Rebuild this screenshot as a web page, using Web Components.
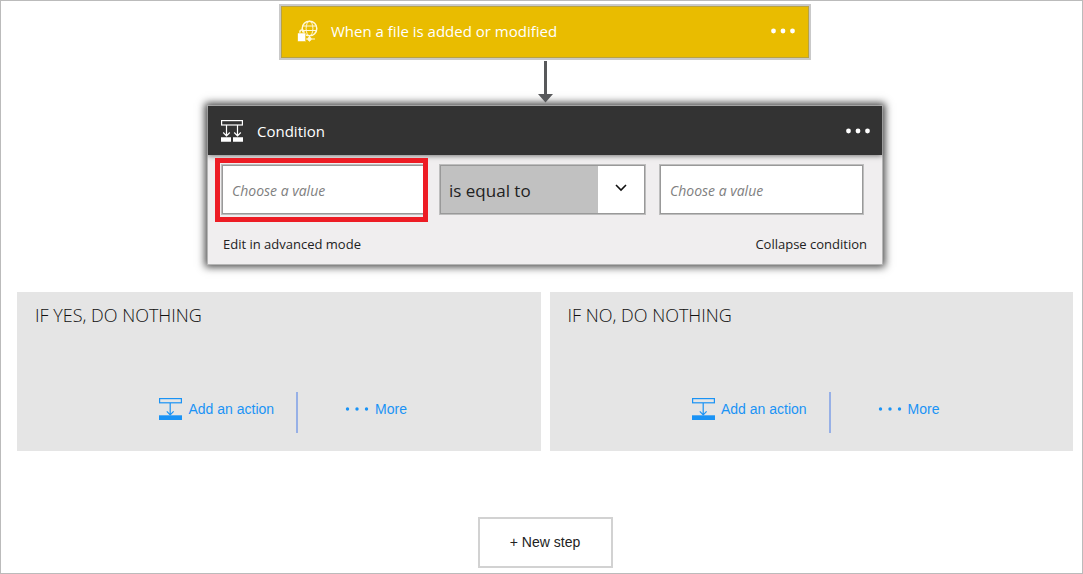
<!DOCTYPE html>
<html lang="en">
<head>
<meta charset="utf-8">
<meta name="viewport" content="width=device-width, initial-scale=1">
<title>Flow designer</title>
<style>
  html { --ui: "Open Sans", "Noto Sans", sans-serif; --alt: "Liberation Sans", Arial, sans-serif; }
  body { margin: 0; font-family: var(--ui); color: #222; background: #fff; }
</style>
</head>
<body>
<flow-canvas>
  <trigger-card>When a file is added or modified</trigger-card>
  <flow-arrow></flow-arrow>
  <condition-card></condition-card>
  <branch-panel slot="branches">IF YES, DO NOTHING</branch-panel>
  <branch-panel slot="branches">IF NO, DO NOTHING</branch-panel>
  <new-step slot="footer">+ New step</new-step>
</flow-canvas>

<script>
function define(name, html) {
  const template = document.createElement('template');
  template.innerHTML = html;
  customElements.define(name, class extends HTMLElement {
    constructor() {
      super();
      this.attachShadow({ mode: 'open' }).append(template.content.cloneNode(true));
    }
  });
}

define('flow-canvas', `
  <style>
    :host { display: block; box-sizing: border-box; min-height: 100vh; padding: 3px 9px 5px 16px; border: 1px solid #bbb; background: #fff; }
    .steps { display: flex; flex-direction: column; align-items: center; }
    .branches { display: grid; grid-template-columns: 1fr 1fr; gap: 9px; margin-top: 27px; }
    .footer { display: flex; justify-content: center; margin-top: 66px; }
  </style>
  <main>
    <div class="steps"><slot></slot></div>
    <div class="branches"><slot name="branches"></slot></div>
    <div class="footer"><slot name="footer"></slot></div>
  </main>`);

define('more-button', `
  <style>
    :host { display: block; }
    button { display: block; padding: 8px 0; border: 0; background: none; color: inherit; cursor: pointer; }
    svg { display: block; }
  </style>
  <button type="button" aria-label="More options">
    <svg width="26" height="6" viewBox="0 0 26 6" fill="currentColor"><circle cx="3.5" cy="3" r="2.4"/><circle cx="13" cy="3" r="2.4"/><circle cx="22.5" cy="3" r="2.4"/></svg>
  </button>`);

define('trigger-card', `
  <style>
    :host { display: flex; align-items: center; box-sizing: border-box; width: 100%; max-width: 532px; height: 56px; padding: 0 13px 2px 16px; border: 2px solid #c9c9c9; background: #e9bc00; box-shadow: inset 0 0 0 1px #b9a241; color: #fff; }
    svg { display: block; flex: none; }
    .title { flex: 1; margin: 0 0 0 12px; font-size: 15px; line-height: 20px; font-weight: 400; }
  </style>
  <svg width="22" height="24" viewBox="0 0 22 24" fill="none" stroke="#fff8d8" stroke-width="1">
    <circle cx="12.5" cy="9.5" r="7.3" stroke-width="1.5"/>
    <ellipse cx="12.5" cy="9.5" rx="3.4" ry="7.3"/>
    <path d="M5.5 7h14M5.2 11.5h14.5M12.5 17v5.5M9 20h9"/>
    <circle cx="12.5" cy="20" r="1.7" fill="#fff8d8"/>
    <path d="M2.9 14.5v-1.6a2 2 0 0 1 4 0v1.6" stroke-width="1.5"/>
    <rect x=".7" y="14" width="8" height="8.5" fill="#fff" stroke="#e9bc00" stroke-width=".5"/>
  </svg>
  <h2 class="title"><slot></slot></h2>
  <more-button></more-button>`);

define('flow-arrow', `
  <style>
    :host { display: block; position: relative; z-index: 1; padding: 1px 0 2px; }
    svg { display: block; }
  </style>
  <svg width="16" height="42" viewBox="0 0 16 42" fill="#58595b" aria-hidden="true"><path d="M7 0h3v33h6l-7.5 8.5L1 33h6z"/></svg>`);

define('value-box', `
  <style>
    :host { display: block; }
    input { display: block; box-sizing: border-box; width: 100%; height: 51px; margin: 0; padding: 1px 10px 0; border: 1px solid #bdbdbd; border-radius: 0; background: #fff; box-shadow: inset 0 0 0 1px #999; font: italic 14px/20px var(--ui); color: #333; outline: 0; }
    input::placeholder { color: #808080; opacity: 1; }
  </style>
  <input type="text" placeholder="Choose a value" aria-label="Choose a value">`);

define('operator-select', `
  <style>
    :host { display: grid; grid-template-columns: 1fr 48px; align-items: center; }
    select { grid-area: 1 / 1 / 2 / 3; box-sizing: border-box; width: 100%; height: 51px; margin: 0; padding: 3px 48px 0 9px; appearance: none; border: 1px solid #bdbdbd; border-radius: 0; background: linear-gradient(to left, #fff 47px, #c1c1c1 47px); box-shadow: inset 0 0 0 1px #999; font: 17px/24px var(--ui); color: #222; outline: 0; }
    svg { grid-area: 1 / 2; justify-self: center; pointer-events: none; margin: 0 3px 3px 0; }
  </style>
  <select aria-label="Operator"><option>is equal to</option><option>is not equal to</option><option>is greater than</option><option>is less than</option></select>
  <svg width="12" height="8" viewBox="0 0 12 8" fill="none" stroke="#111" stroke-width="1.6" aria-hidden="true"><path d="M1 1l5 5 5-5"/></svg>`);

define('condition-card', `
  <style>
    :host { display: block; box-sizing: border-box; width: 100%; max-width: 676px; border: 1px solid #b5b5b5; background: #f0eeef; box-shadow: 0 0 8px 2px #444; }
    header { display: flex; align-items: center; height: 49px; padding: 0 11px 0 13px; background: #333; color: #fff; box-shadow: 0 1px 5px #777; }
    header svg { display: block; flex: none; }
    h2 { flex: 1; margin: 0 0 0 14px; font-size: 15px; line-height: 20px; font-weight: 400; }
    .fields { display: grid; grid-template-columns: 205fr 207fr 205fr; gap: 13px; padding: 9px 18px 0 13px; }
    .marked { position: relative; }
    .marked::after { content: ""; position: absolute; inset: -6px -2px -7px -6px; border: 5px solid #ed1c24; pointer-events: none; }
    .links { display: flex; justify-content: space-between; padding: 19px 15px 10px; font-size: 13px; line-height: 20px; }
    a { color: #222; text-decoration: none; }
  </style>
  <header>
    <svg width="22" height="22" viewBox="0 0 22 22" fill="none" stroke="#fff" stroke-width="1.2" aria-hidden="true">
      <rect x=".6" y=".6" width="20.8" height="4.4"/>
      <path d="M5.5 5v10.5M2.2 12.5l3.3 3.3 3.3-3.3M16.5 5v10.5M13.2 12.5l3.3 3.3 3.3-3.3"/>
      <path d="M0 17.3h10v4.5H0zM12 17.3h10v4.5H12z" fill="#fff" stroke="none"/>
    </svg>
    <h2>Condition</h2>
    <more-button></more-button>
  </header>
  <div class="fields">
    <value-box class="marked"></value-box>
    <operator-select></operator-select>
    <value-box></value-box>
  </div>
  <div class="links"><a href="#advanced">Edit in advanced mode</a><a href="#collapse">Collapse condition</a></div>`);

define('branch-panel', `
  <style>
    :host { display: block; padding: 12px 18px 18px; background: #e5e5e5; }
    h3 { margin: 0; font-size: 18px; line-height: 22px; font-weight: 300; color: #111; }
    .actions { display: flex; align-items: center; justify-content: center; margin-top: 66px; padding-left: 9px; }
    button { display: flex; align-items: center; padding: 0; height: 34px; border: 0; background: none; font: 14px/20px var(--alt); color: #1a93f5; cursor: pointer; }
    .add { gap: 6px; }
    .more { gap: 6px; }
    .rule { width: 2px; height: 41px; margin: 0 47px 0 22px; background: #97b0e6; }
    .wrap { padding-bottom: 7px; }
  </style>
  <h3><slot></slot></h3>
  <div class="actions">
    <div class="wrap"><button type="button" class="add">
      <svg width="23" height="22" viewBox="0 0 23 22" fill="none" stroke="#1a93f5" stroke-width="1.2" aria-hidden="true">
        <rect x=".6" y=".6" width="21.8" height="4.2"/><path d="M11.2 5v11.5M7.8 13.4l3.4 3.4 3.4-3.4"/><path d="M0 17.3h23V22H0z" fill="#1a93f5" stroke="none"/>
      </svg>Add an action</button></div>
    <div class="rule"></div>
    <div class="wrap"><button type="button" class="more">
      <svg width="24" height="4" viewBox="0 0 24 4" fill="#1a93f5" aria-hidden="true"><circle cx="2.5" cy="2" r="1.7"/><circle cx="12" cy="2" r="1.7"/><circle cx="21.5" cy="2" r="1.7"/></svg>More</button></div>
  </div>`);

define('new-step', `
  <style>
    :host { display: block; }
    button { display: block; width: 135px; height: 51px; padding: 0 0 2px; border: 2px solid #d2d2d2; background: #fff; font: 14px/20px var(--alt); color: #222; cursor: pointer; }
  </style>
  <button type="button"><slot></slot></button>`);
</script>
</body>
</html>
